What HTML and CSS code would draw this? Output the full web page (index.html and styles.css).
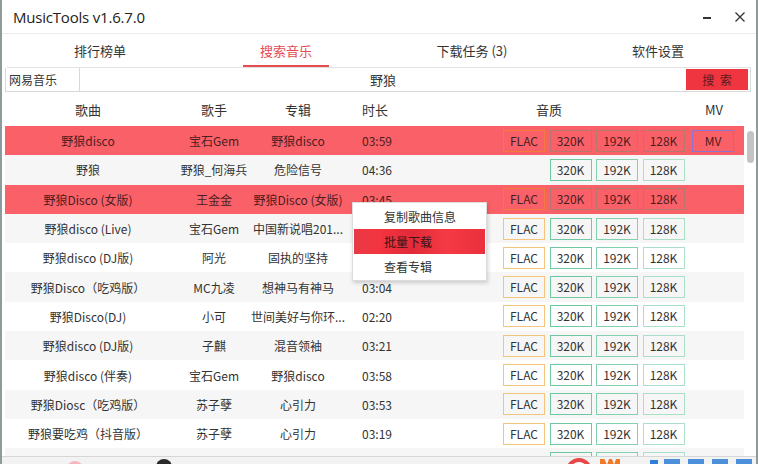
FILE: index.html
```html
<!DOCTYPE html>
<html lang="zh-CN">
<head>
<meta charset="utf-8">
<title>MusicTools v1.6.7.0</title>
<link rel="stylesheet" href="styles.css">
</head>
<body>
<div class="window">
  <header class="titlebar">
    <span class="title">MusicTools v1.6.7.0</span>
    <div class="winctl">
      <svg class="min" width="10" height="10" viewBox="0 0 10 10"><rect x="1" y="5" width="8" height="2" fill="#333"/></svg>
      <svg class="close" width="12" height="12" viewBox="0 0 12 12"><path d="M1.5 1.5L10.5 10.5M10.5 1.5L1.5 10.5" stroke="#333" stroke-width="1.3" fill="none"/></svg>
    </div>
  </header>
  <nav class="tabs">
    <div class="tab">排行榜单</div>
    <div class="tab active">搜索音乐</div>
    <div class="tab">下载任务 (3)</div>
    <div class="tab">软件设置</div>
  </nav>
  <div class="searchbar">
    <div class="source">网易音乐</div>
    <div class="query">野狼</div>
    <div class="go">搜&nbsp;索</div>
  </div>
  <div class="thead">
    <div class="c-song">歌曲</div>
    <div class="c-singer">歌手</div>
    <div class="c-album">专辑</div>
    <div class="c-time">时长</div>
    <div class="c-quality">音质</div>
    <div class="c-mv">MV</div>
  </div>
  <div class="list">
    <div class="rows">
      <div class="row hl">
        <div class="c-song">野狼disco</div><div class="c-singer">宝石Gem</div><div class="c-album">野狼disco</div><div class="c-time">03:59</div>
        <div class="c-quality"><span class="q flac">FLAC</span><span class="q">320K</span><span class="q">192K</span><span class="q">128K</span></div>
        <div class="c-mv"><span class="q mv">MV</span></div>
      </div>
      <div class="row alt">
        <div class="c-song">野狼</div><div class="c-singer">野狼_何海兵</div><div class="c-album">危险信号</div><div class="c-time">04:36</div>
        <div class="c-quality"><span class="q empty"></span><span class="q k320">320K</span><span class="q k192">192K</span><span class="q k128">128K</span></div>
        <div class="c-mv"></div>
      </div>
      <div class="row hl">
        <div class="c-song">野狼Disco (女版)</div><div class="c-singer">王金金</div><div class="c-album">野狼Disco (女版)</div><div class="c-time">03:45</div>
        <div class="c-quality"><span class="q flac">FLAC</span><span class="q">320K</span><span class="q">192K</span><span class="q">128K</span></div>
        <div class="c-mv"></div>
      </div>
      <div class="row alt">
        <div class="c-song">野狼disco (Live)</div><div class="c-singer">宝石Gem</div><div class="c-album">中国新说唱201...</div><div class="c-time">03:53</div>
        <div class="c-quality"><span class="q flac">FLAC</span><span class="q k320">320K</span><span class="q k192">192K</span><span class="q k128">128K</span></div>
        <div class="c-mv"></div>
      </div>
      <div class="row">
        <div class="c-song">野狼disco (DJ版)</div><div class="c-singer">阿光</div><div class="c-album">固执的坚持</div><div class="c-time">03:40</div>
        <div class="c-quality"><span class="q flac">FLAC</span><span class="q k320">320K</span><span class="q k192">192K</span><span class="q k128">128K</span></div>
        <div class="c-mv"></div>
      </div>
      <div class="row alt">
        <div class="c-song">野狼Disco（吃鸡版）</div><div class="c-singer">MC九凌</div><div class="c-album">想神马有神马</div><div class="c-time">03:04</div>
        <div class="c-quality"><span class="q flac">FLAC</span><span class="q k320">320K</span><span class="q k192">192K</span><span class="q k128">128K</span></div>
        <div class="c-mv"></div>
      </div>
      <div class="row">
        <div class="c-song">野狼Disco(DJ)</div><div class="c-singer">小可</div><div class="c-album">世间美好与你环...</div><div class="c-time">02:20</div>
        <div class="c-quality"><span class="q flac">FLAC</span><span class="q k320">320K</span><span class="q k192">192K</span><span class="q k128">128K</span></div>
        <div class="c-mv"></div>
      </div>
      <div class="row alt">
        <div class="c-song">野狼disco (DJ版)</div><div class="c-singer">子麒</div><div class="c-album">混音领袖</div><div class="c-time">03:21</div>
        <div class="c-quality"><span class="q flac">FLAC</span><span class="q k320">320K</span><span class="q k192">192K</span><span class="q k128">128K</span></div>
        <div class="c-mv"></div>
      </div>
      <div class="row">
        <div class="c-song">野狼disco (伴奏)</div><div class="c-singer">宝石Gem</div><div class="c-album">野狼disco</div><div class="c-time">03:58</div>
        <div class="c-quality"><span class="q flac">FLAC</span><span class="q k320">320K</span><span class="q k192">192K</span><span class="q k128">128K</span></div>
        <div class="c-mv"></div>
      </div>
      <div class="row alt">
        <div class="c-song">野狼Diosc（吃鸡版）</div><div class="c-singer">苏子孽</div><div class="c-album">心引力</div><div class="c-time">03:53</div>
        <div class="c-quality"><span class="q flac">FLAC</span><span class="q k320">320K</span><span class="q k192">192K</span><span class="q k128">128K</span></div>
        <div class="c-mv"></div>
      </div>
      <div class="row">
        <div class="c-song">野狼要吃鸡（抖音版）</div><div class="c-singer">苏子孽</div><div class="c-album">心引力</div><div class="c-time">03:19</div>
        <div class="c-quality"><span class="q flac">FLAC</span><span class="q k320">320K</span><span class="q k192">192K</span><span class="q k128">128K</span></div>
        <div class="c-mv"></div>
      </div>
      <div class="row alt">
        <div class="c-song"></div><div class="c-singer"></div><div class="c-album"></div><div class="c-time"></div>
        <div class="c-quality"><span class="q empty"></span><span class="q k320"></span><span class="q k192"></span><span class="q k128"></span></div>
        <div class="c-mv"></div>
      </div>
    </div>
    <div class="scroll"><div class="thumb"></div></div>
  </div>
  <footer class="status">
    <span class="wm wm-pink"></span>
    <span class="wm wm-dark"></span>
    <span class="wm wm-ring"></span>
    <span class="wm wm-w"></span>
    <span class="wm wm-sq"></span>
    <span class="wm wm-bar"></span>
  </footer>
  <div class="menu">
    <div class="mi">复制歌曲信息</div>
    <div class="mi on">批量下载</div>
    <div class="mi">查看专辑</div>
  </div>
</div>
</body>
</html>
```
FILE: styles.css
```css
* { box-sizing: border-box; }
html, body { margin: 0; padding: 0; background: #fff; }
body {
  font-family: "Noto Sans CJK SC", "Noto Sans", sans-serif;
  color: #333;
  font-size: 12px;
}
.window {
  position: relative;
  width: 758px;
  height: 464px;
  overflow: hidden;
  background: #fff;
  border-left: 2px solid #8f9b9b;
  border-right: 2px solid #8f9b9b;
  display: flex;
  flex-direction: column;
}
.titlebar {
  height: 34px;
  flex: none;
  display: flex;
  align-items: center;
  justify-content: space-between;
  padding: 0 10px 0 11px;
  border-bottom: 1px solid #ececec;
}
.title {
  font-family: "Open Sans", "Noto Sans", sans-serif;
  font-size: 15px;
  color: #222;
  letter-spacing: -0.2px;
}
.winctl { display: flex; align-items: center; gap: 22px; }
.winctl svg { display: block; }
.tabs {
  height: 34px;
  flex: none;
  margin: 0 5px;
  display: grid;
  grid-template-columns: repeat(4, 1fr);
  border-bottom: 1px solid #e2e2e2;
}
.tab {
  position: relative;
  display: flex;
  align-items: center;
  justify-content: center;
  font-size: 13px;
  color: #333;
  padding-bottom: 1px;
}
.tab.active { color: #e64a52; }
.tab.active::after {
  content: "";
  position: absolute;
  left: 50%;
  bottom: 0;
  width: 86px;
  margin-left: -43px;
  height: 2px;
  background: #e84c53;
}
.searchbar {
  height: 24px;
  flex: none;
  margin: 0 5px 0 3px;
  display: flex;
  border: 1px solid #d9d9d9;
  border-top: none;
}
.source {
  width: 74px;
  border-right: 1px solid #d9d9d9;
  padding-left: 3px;
  display: flex;
  align-items: center;
  font-size: 12px;
}
.query {
  flex: 1;
  display: flex;
  align-items: center;
  justify-content: center;
  font-size: 13px;
}
.go {
  width: 62px;
  margin: 1px 2px 1px 0;
  background: #ee3540;
  color: #5b1c20;
  display: flex;
  align-items: center;
  justify-content: center;
  font-size: 12px;
  word-spacing: 3px;
}
.thead, .row {
  display: grid;
  grid-template-columns: 166px 86px 82px 164px 189px 52px;
  align-items: center;
}
.thead {
  height: 34px;
  flex: none;
  margin-left: 3px;
  font-size: 13px;
  color: #333;
}
.c-song, .c-singer, .c-album { text-align: center; white-space: nowrap; }
.c-album { display: flex; justify-content: center; }
.c-time { padding-left: 23px; }
.thead .c-quality { padding-left: 33px; }
.thead .c-mv { padding-left: 13px; }
.list {
  height: 330px;
  flex: none;
  display: flex;
  margin-left: 3px;
  overflow: hidden;
}
.rows { width: 739px; flex: none; }
.row { height: 29.3px; background: #fff; }
.row.alt { background: #f6f6f6; }
.row.hl { background: #fa6068; color: #4a1e20; }
.c-quality { display: flex; gap: 4.5px; }
.q {
  display: inline-block;
  width: 42px;
  height: 22px;
  border: 1px solid #8fd6b8;
  line-height: 20px;
  text-align: center;
  font-size: 12px;
  color: #333;
}
.q.empty { border-color: transparent; }
.q.flac { border-color: #f2c47c; }
.q.k320 { border-color: #6ec9a2; }
.q.k192 { border-color: #82d0ae; }
.q.k128 { border-color: #a9e0c7; }
.hl .q { border-color: #b5786d; color: #4a1e20; }
.hl .q.flac { border-color: #f37a3a; }
.hl .q.mv { border-color: #8a76d2; }
.scroll {
  flex: 1;
  position: relative;
  background: #fff;
}
.thumb {
  position: absolute;
  left: 3px;
  top: 5px;
  width: 7px;
  height: 32px;
  border-radius: 4px;
  background: #c3c3c3;
}
.status {
  flex: 1;
  position: relative;
  border-top: 1px solid #d6d6d6;
  background: #f2f2f2;
}
.wm { position: absolute; display: block; }
.wm-pink { left: 64px; top: 4px; width: 18px; height: 18px; border-radius: 50%; background: #f5b6bd; }
.wm-dark { left: 154px; top: 2px; width: 16px; height: 16px; border-radius: 50%; background: #2a2a2a; }
.wm-ring { left: 564px; top: 1px; width: 26px; height: 26px; border-radius: 50%; border: 4px solid #e8484a; background: #fff; }
.wm-w { left: 598px; top: 2px; width: 20px; height: 10px; background: #f07a2a; clip-path: polygon(0 0, 22% 0, 35% 60%, 45% 0, 60% 0, 70% 60%, 80% 0, 100% 0, 100% 100%, 0 100%); }
.wm-sq { left: 648px; top: 3px; width: 8px; height: 8px; background: #2f7fd8; }
.wm-bar { left: 662px; top: 2px; width: 90px; height: 10px; background: repeating-linear-gradient(90deg, #2f7fd8 0 16px, transparent 16px 24px); opacity: 0.85; }
.menu {
  position: absolute;
  left: 350px;
  top: 202px;
  width: 135px;
  padding: 1px;
  background: #fff;
  border: 1px solid #dcdcdc;
  box-shadow: 1px 2px 4px rgba(0,0,0,0.18);
}
.mi {
  height: 25px;
  line-height: 25px;
  padding-left: 30px;
  font-size: 12px;
  color: #333;
}
.mi.on {
  background: linear-gradient(90deg, #e83a46 0%, #f4343f 20%, #e12a38 45%, #f53a45 70%, #ea303c 100%);
  color: #3a1416;
}
```
